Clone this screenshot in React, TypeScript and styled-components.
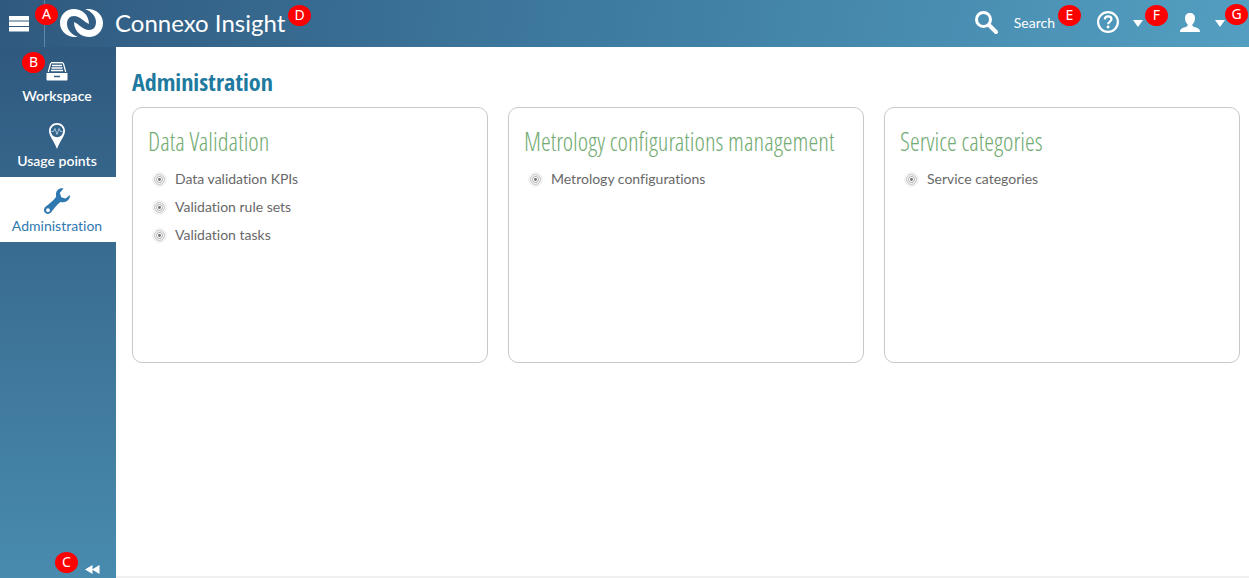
import React from 'react';
import styled, { createGlobalStyle } from 'styled-components';

const Global = createGlobalStyle`
  * { box-sizing: border-box; }
  body {
    margin: 0;
    background: #fff;
    font-family: Lato, sans-serif;
    font-size: 14px;
    font-variant-ligatures: none;
    color: #686868;
  }
  button { border: 0; padding: 0; background: none; color: inherit; font: inherit; cursor: pointer; }
  a { color: inherit; text-decoration: none; }
  svg { display: block; flex: none; }
`;

const Page = styled.div`
  min-height: 100vh;
  display: flex;
  flex-direction: column;
`;

const Header = styled.header`
  height: 47px;
  display: flex;
  align-items: flex-start;
  color: #fff;
  background: linear-gradient(100deg, #30597f, #3f7ca2 50%, #539fc1);
`;

const MenuButton = styled.button`
  position: relative;
  width: 45px;
  height: 47px;
  padding-left: 9px;
  border-right: 1px solid #5f86a5;
`;

const Brand = styled.a`
  position: relative;
  display: flex;
  align-items: center;
  gap: 11px;
  margin-left: 15px;
  height: 46px;
  font-size: 24px;
  line-height: 46px;
  flex: none;
`;

const Tools = styled.div`
  display: flex;
  align-items: center;
  gap: 37px;
  height: 44px;
  margin-left: auto;
  padding-right: 24px;
`;

const ToolButton = styled.button<{ $gap: number }>`
  position: relative;
  display: flex;
  align-items: center;
  gap: ${p => p.$gap}px;
  height: 44px;
  &:first-child { margin-right: 5px; }
`;

const Marker = styled.span<{ $x: number; $y: number }>`
  position: absolute;
  left: ${p => p.$x}px;
  top: ${p => p.$y}px;
  width: 23px;
  height: 21px;
  border-radius: 50%;
  background: #f00;
  color: #fff;
  font: 14px/20px "Noto Sans", sans-serif;
  text-align: center;
`;

const Body = styled.div`
  flex: 1;
  display: flex;
`;

const Sidebar = styled.nav`
  flex: none;
  width: 116px;
  display: flex;
  flex-direction: column;
  background: linear-gradient(#30597f, #488bae);
`;

const NavItem = styled.a<{ $active?: boolean }>`
  position: relative;
  height: 65px;
  padding: 9px 2px 0 0;
  display: flex;
  flex-direction: column;
  align-items: center;
  line-height: 20px;
  font-weight: ${p => (p.$active ? 400 : 600)};
  color: ${p => (p.$active ? '#2f78b0' : '#fff')};
  background: ${p => (p.$active ? '#fff' : 'transparent')};
`;

const NavIcon = styled.span`
  height: 30px;
  display: flex;
  align-items: center;
`;

const Collapse = styled.button`
  position: relative;
  align-self: flex-end;
  margin: auto 16px 4px 0;
  color: #fff;
`;

const Main = styled.main`
  flex: 1;
  min-width: 0;
  padding: 19px 9px 0 16px;
  border-bottom: 2px solid #f0f0f0;
`;

const Title = styled.h1`
  margin: 0 0 9px;
  font: 700 24px/32px "Open Sans Condensed", "Liberation Sans Narrow", sans-serif;
  color: #1f7aa0;
`;

const Cards = styled.div`
  display: grid;
  grid-template-columns: repeat(3, minmax(0, 1fr));
  gap: 20px;
`;

const Card = styled.section`
  min-height: 256px;
  padding: 15px;
  border: 1px solid #c9c9c9;
  border-radius: 10px;
`;

const CardTitle = styled.h2`
  margin: 0 0 8px;
  font: 300 25px/36px "Open Sans Condensed Light", "Open Sans Light Condensed", "Liberation Sans Narrow", sans-serif;
  color: #72ab72;
  white-space: nowrap;
`;

const Links = styled.ul`
  margin: 0;
  padding: 0 0 0 4px;
  list-style: none;
`;

const LinkItem = styled.li`
  height: 28px;
  display: flex;
  align-items: flex-start;
  gap: 8px;
  line-height: 24px;
  svg { margin-top: 5px; }
`;

const Caret = () => (
  <svg width="10" height="9" viewBox="0 0 10 9"><path d="M0 2h10L5 9z" fill="currentColor" /></svg>
);

const Target = () => (
  <svg width="15" height="15" viewBox="0 0 15 15" fill="none">
    <circle cx="7.5" cy="7.5" r="6.7" stroke="#e8e8e8" />
    <circle cx="7.5" cy="7.5" r="4.9" stroke="#b0b0b0" strokeWidth=".9" />
    <circle cx="7.5" cy="7.5" r="3" stroke="#a2a2a2" strokeWidth=".9" />
    <circle cx="7.5" cy="7.5" r="1.4" fill="#6e6e6e" />
  </svg>
);

const logoHalf = 'M18 28C8 29 0 23 0 14C0 6 6 0 14 0C21 0 29 5 29 15C24 13 20 7 14 7C9.500 7 7 10 7 15C7 21 12 26 18 28Z';

const Logo = () => (
  <svg width="44" height="28" viewBox="0 0 44 28" fill="currentColor">
    <path d={logoHalf} />
    <path d={logoHalf} transform="rotate(180 21.5 14)" />
  </svg>
);

const SearchIcon = () => (
  <svg width="23" height="23" viewBox="0 0 23 23" fill="none" stroke="currentColor">
    <circle cx="8.5" cy="8.5" r="7" strokeWidth="3" />
    <path d="M14 14l7 7" strokeWidth="4" strokeLinecap="round" />
  </svg>
);

const HelpIcon = () => (
  <svg width="22" height="22" viewBox="0 0 22 22" fill="none" stroke="currentColor">
    <circle cx="11" cy="11" r="9.9" strokeWidth="2.2" />
    <path d="M7.700 8.300C7.900 6.300 9.300 5.400 11.200 5.400C13.200 5.400 14.500 6.500 14.500 8.100C14.500 10.600 11.100 10.500 11.100 13.300" strokeWidth="2.2" />
    <circle cx="11.100" cy="16" r="1.400" fill="currentColor" stroke="none" />
  </svg>
);

const UserIcon = () => (
  <svg width="20" height="19" viewBox="0 0 20 19" fill="currentColor">
    <path d="M10 0C13 0 15 2 15 5C15 8 14 10 12.300 11.500C12.300 13 13 13.600 15 14.200C18.500 15.200 20 16 20 19H0C0 16 1.500 15.200 5 14.200C7 13.600 7.700 13 7.700 11.500C6 10 5 8 5 5C5 2 7 0 10 0Z" />
  </svg>
);

const WorkspaceIcon = () => (
  <svg width="22" height="19" viewBox="0 0 22 19" fill="none" stroke="currentColor">
    <path d="M5 .7h12" strokeWidth="1.400" />
    <path d="M4.700 1L2.300 10M17.300 1L19.700 10" strokeWidth="1.200" />
    <path d="M6 3.500h10M5.500 6h11M5 8.500h12" strokeWidth="1.300" />
    <path d="M.5 11h21v6.500a1 1 0 0 1-1 1h-19a1 1 0 0 1-1-1z" fill="currentColor" stroke="none" />
    <path d="M8 14.500h6" stroke="#325e84" strokeWidth="1.500" />
  </svg>
);

const PinIcon = () => (
  <svg width="16" height="26" viewBox="0 0 16 26">
    <path d="M8 0C12.500 0 16 3.400 16 7.800C16 13 11.500 17 8 26C4.500 17 0 13 0 7.800C0 3.400 3.500 0 8 0Z" fill="currentColor" />
    <circle cx="8" cy="8" r="6.200" fill="#34658b" />
    <path d="M2.500 8.500h2l1.500-3 2 6 2-6 1.500 3h2" fill="none" stroke="#a9c2d5" />
  </svg>
);

const WrenchIcon = () => (
  <svg width="26" height="26" viewBox="0 0 26 26" fill="currentColor">
    <path fillRule="evenodd" d="M19.500 .4C14.500-.6 11 3.500 12.200 8.500C11 11 7 14.500 1.500 18.800C-.5 20.500-.4 23.400 1 24.800C2.600 26.400 5.300 26.300 7 24.500C10.500 20 14 15.500 16.500 14C21 15.400 26.500 12.500 25.900 7L21.500 10.500L17.200 9.200L15.900 4.800ZM4 20.300a1.900 1.900 0 1 1 0 3.800a1.900 1.900 0 0 1 0-3.800Z" />
  </svg>
);

const cards = [
  { title: 'Data Validation', links: ['Data validation KPIs', 'Validation rule sets', 'Validation tasks'] },
  { title: 'Metrology configurations management', links: ['Metrology configurations'] },
  { title: 'Service categories', links: ['Service categories'] },
];

export default function App() {
  return (
    <Page>
      <Global />
      <Header>
        <MenuButton aria-label="Menu">
          <svg width="20" height="16" viewBox="0 0 20 16" fill="currentColor">
            <path d="M0 0h20v4.500H0zM0 5.500h20v4.500H0zM0 11h20v4.500H0z" />
          </svg>
          <Marker $x={35} $y={4}>A</Marker>
        </MenuButton>
        <Brand href="#">
          <Logo />
          Connexo Insight
          <Marker $x={228} $y={5}>D</Marker>
        </Brand>
        <Tools>
          <ToolButton $gap={16}>
            <SearchIcon />
            Search
            <Marker $x={83} $y={5}>E</Marker>
          </ToolButton>
          <ToolButton $gap={14} aria-label="Help">
            <HelpIcon />
            <Caret />
            <Marker $x={48} $y={5}>F</Marker>
          </ToolButton>
          <ToolButton $gap={15} aria-label="User">
            <UserIcon />
            <Caret />
            <Marker $x={45} $y={4}>G</Marker>
          </ToolButton>
        </Tools>
      </Header>
      <Body>
        <Sidebar>
          <NavItem href="#">
            <NavIcon><WorkspaceIcon /></NavIcon>
            Workspace
            <Marker $x={22} $y={5}>B</Marker>
          </NavItem>
          <NavItem href="#">
            <NavIcon><PinIcon /></NavIcon>
            Usage points
          </NavItem>
          <NavItem href="#" $active>
            <NavIcon><WrenchIcon /></NavIcon>
            Administration
          </NavItem>
          <Collapse aria-label="Collapse">
            <svg width="15" height="9" viewBox="0 0 15 9" fill="currentColor">
              <path d="M0 4.500L7.500 0v9zM7 4.500L14.500 0v9z" />
            </svg>
            <Marker $x={-30} $y={-13}>C</Marker>
          </Collapse>
        </Sidebar>
        <Main>
          <Title>Administration</Title>
          <Cards>
            {cards.map(card => (
              <Card key={card.title}>
                <CardTitle>{card.title}</CardTitle>
                <Links>
                  {card.links.map(link => (
                    <LinkItem key={link}>
                      <Target />
                      <a href="#">{link}</a>
                    </LinkItem>
                  ))}
                </Links>
              </Card>
            ))}
          </Cards>
        </Main>
      </Body>
    </Page>
  );
}
